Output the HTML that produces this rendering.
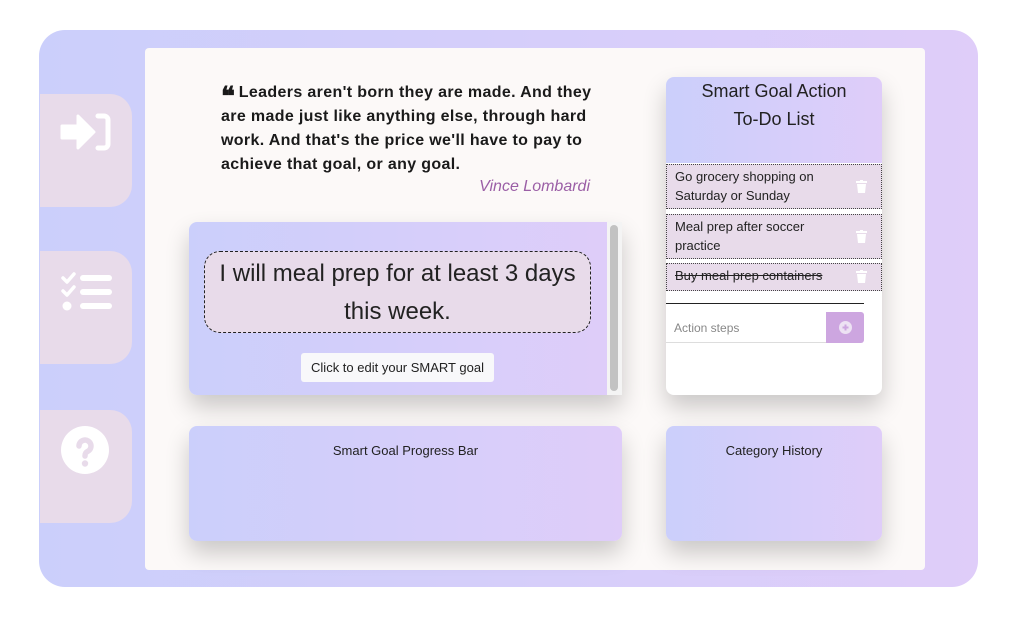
<!DOCTYPE html>
<html><head><style>
*{margin:0;padding:0;box-sizing:border-box}
body{width:1013px;height:620px;background:#fff;position:relative;overflow:hidden;font-family:"Liberation Sans",sans-serif;color:#222}
.outer{position:absolute;left:39px;top:30px;width:939px;height:557px;border-radius:26px;background:linear-gradient(90deg,#cbcffb,#dfcdf9)}
.panel{position:absolute;left:145px;top:48px;width:780px;height:522px;background:#fcf9f8;border-radius:4px}
.tab{position:absolute;left:40px;width:92px;height:113px;background:#e8dbea;border-radius:0 22px 22px 0}
.tab svg{position:absolute;left:20px;top:18px}
.grad{background:linear-gradient(90deg,#cbcffb,#dfcdf9)}
.card{position:absolute;border-radius:8px;box-shadow:0 12px 24px rgba(0,0,0,.2)}
.quote{position:absolute;left:221px;top:81px;width:385px;font-weight:bold;font-size:16px;line-height:24px;color:#1a1a1a;letter-spacing:0.35px}
.author{position:absolute;left:440px;top:178px;width:150px;text-align:right;font-style:italic;font-size:16px;color:#9b5fa6}
.goalbox{position:absolute;left:204px;top:251px;width:387px;height:82px;border:1px dashed #222;border-radius:16px;background:#e8dbea;text-align:center;font-size:24px;line-height:38px;padding-top:3px}
.btn{position:absolute;left:301px;top:353px;width:193px;height:29px;background:#f8f8fa;border-radius:3px;font-size:13px;text-align:center;line-height:30px}
.item{position:absolute;left:666px;width:216px;background:#e8dbea;border:1px dotted #444;font-size:13px;line-height:19px;padding:2px 0 0 8px}
.trash{position:absolute;right:14px;top:50%;margin-top:-7px;width:11px;height:13px}
.sub{position:absolute;font-size:13px;text-align:center}
</style></head><body>
<div class="outer"></div>
<div class="panel"></div>
<div class="tab" style="top:94px"><svg width="52" height="44" viewBox="0 0 52 44"><path d="M2 14h16V4l16 16-16 16V26H2z" fill="#fff" stroke="#fff" stroke-width="3" stroke-linejoin="round"/><path d="M38 4h6a4 4 0 0 1 4 4v24a4 4 0 0 1-4 4h-6" fill="none" stroke="#fff" stroke-width="5" stroke-linecap="round"/></svg></div>
<div class="tab" style="top:251px"><svg width="56" height="50" viewBox="0 0 56 50"><path d="M3 9l4 4 7-8M3 22l4 4 7-8" fill="none" stroke="#fff" stroke-width="3.5" stroke-linecap="round" stroke-linejoin="round"/><circle cx="7" cy="37" r="4.5" fill="#fff"/><rect x="20" y="6" width="32" height="6" rx="3" fill="#fff"/><rect x="20" y="20" width="32" height="6" rx="3" fill="#fff"/><rect x="20" y="34" width="32" height="6" rx="3" fill="#fff"/></svg></div>
<div class="tab" style="top:410px"><svg style="top:14px" width="52" height="54" viewBox="0 0 52 54"><circle cx="25" cy="26" r="24" fill="#fff"/><path d="M19 22a6 6 0 1 1 8.5 5.5c-2 1-2.5 2-2.5 4.5" fill="none" stroke="#e8dbea" stroke-width="5.5" stroke-linecap="round"/><circle cx="25" cy="39.5" r="3.2" fill="#e8dbea"/></svg></div>

<div class="quote"><span style="font-family:'DejaVu Serif',serif;font-size:26px;vertical-align:-8px;letter-spacing:-1px;line-height:0">❝</span> Leaders aren't born they are made. And they are made just like anything else, through hard work. And that's the price we'll have to pay to achieve that goal, or any goal.</div>
<div class="author">Vince Lombardi</div>

<div class="card grad" style="left:189px;top:222px;width:433px;height:173px;border-radius:8px 0 0 8px"></div>
<div style="position:absolute;left:607px;top:222px;width:15px;height:173px;background:#f4f4f4"><div style="margin:3px 3px;height:166px;width:8px;background:#c2c2c2;border-radius:4px"></div></div>
<div class="goalbox">I will meal prep for at least 3 days<br>this week.</div>
<div class="btn">Click to edit your SMART goal</div>

<div class="card" style="left:666px;top:77px;width:216px;height:318px;background:#fff;overflow:hidden">
<div class="grad" style="height:86px;text-align:center;font-size:18px;line-height:28px;padding-top:0">Smart Goal Action<br>To-Do List</div></div>
<div class="item" style="top:164px;height:45px">Go grocery shopping on<br>Saturday or Sunday<svg class="trash" viewBox="0 0 11 13"><rect x="0" y="1" width="11" height="2" fill="#fff"/><rect x="4" y="0" width="3" height="2" fill="#fff"/><path d="M1 4h9l-1 9H2z" fill="#fff"/></svg></div>
<div class="item" style="top:214px;height:45px">Meal prep after soccer<br>practice<svg class="trash" viewBox="0 0 11 13"><rect x="0" y="1" width="11" height="2" fill="#fff"/><rect x="4" y="0" width="3" height="2" fill="#fff"/><path d="M1 4h9l-1 9H2z" fill="#fff"/></svg></div>
<div class="item" style="top:263px;height:28px;text-decoration:line-through">Buy meal prep containers<svg class="trash" viewBox="0 0 11 13"><rect x="0" y="1" width="11" height="2" fill="#fff"/><rect x="4" y="0" width="3" height="2" fill="#fff"/><path d="M1 4h9l-1 9H2z" fill="#fff"/></svg></div>
<div style="position:absolute;left:666px;top:303px;width:198px;height:1px;background:#222"></div>
<div style="position:absolute;left:666px;top:312px;width:160px;height:31px;border-bottom:1px solid #ddd;font-size:12px;color:#888;padding:9px 0 0 8px">Action steps</div>
<div style="position:absolute;left:826px;top:312px;width:38px;height:31px;background:#cda6e0;border-radius:0 3px 3px 0"><svg style="position:absolute;left:13px;top:9px" width="13" height="13" viewBox="0 0 13 13"><circle cx="6.5" cy="6.5" r="6.5" fill="#ede2f3"/><path d="M6.5 3.5v6M3.5 6.5h6" stroke="#cda6e0" stroke-width="2"/></svg></div>

<div class="card grad" style="left:189px;top:426px;width:433px;height:115px"></div>
<div class="sub" style="left:189px;top:443px;width:433px">Smart Goal Progress Bar</div>
<div class="card grad" style="left:666px;top:426px;width:216px;height:115px"></div>
<div class="sub" style="left:666px;top:443px;width:216px">Category History</div>
</body></html>
